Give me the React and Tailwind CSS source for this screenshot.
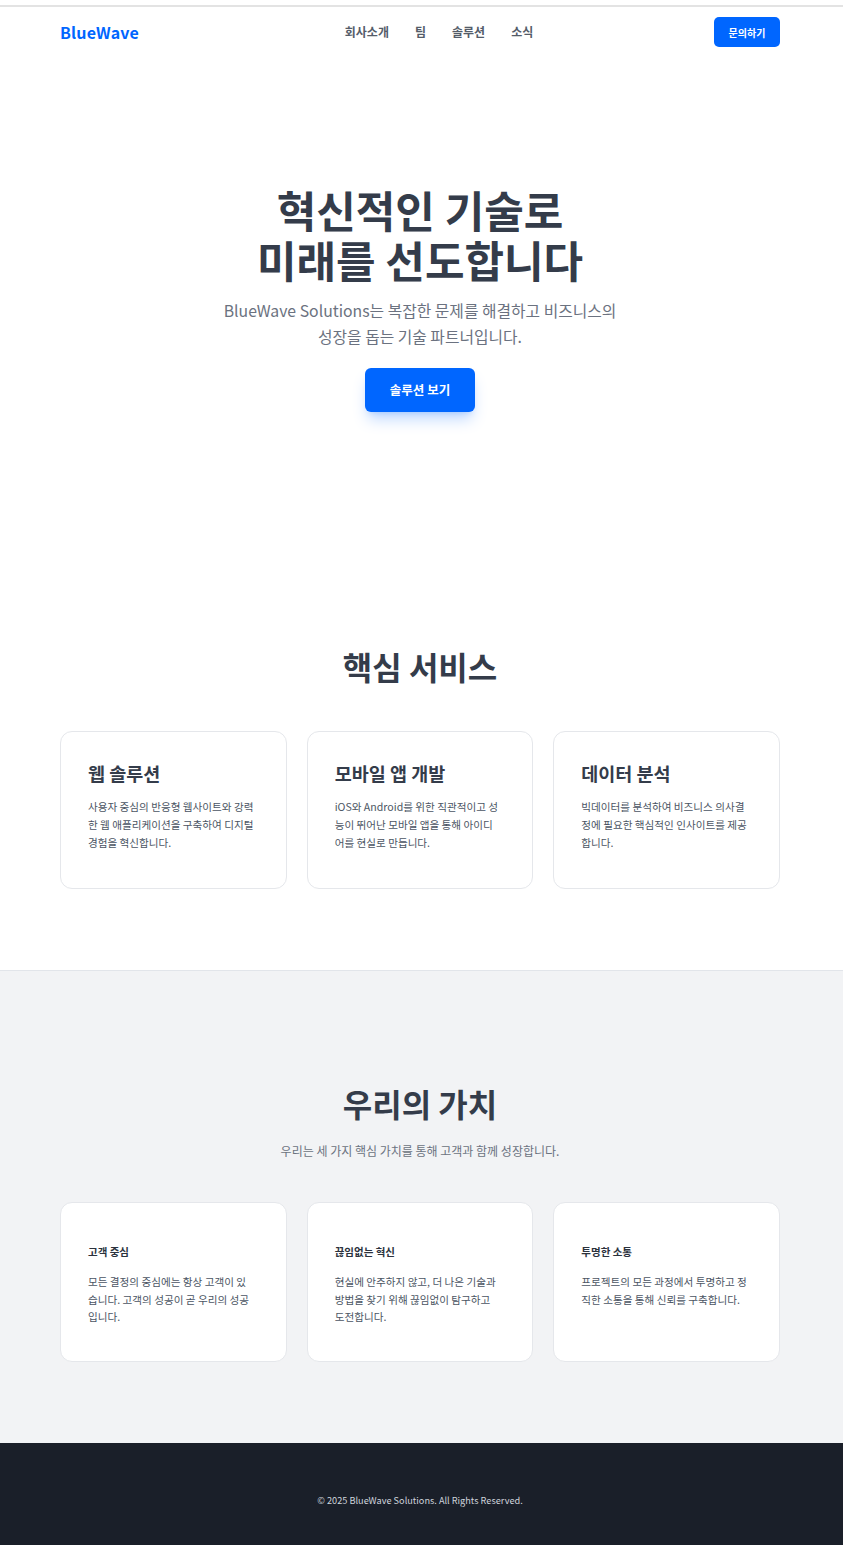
import React from "react";

const font = { fontFamily: '"Noto Sans CJK KR", "Noto Sans", sans-serif' };

const services = [
  {
    title: "웹 솔루션",
    lines: ["사용자 중심의 반응형 웹사이트와 강력", "한 웹 애플리케이션을 구축하여 디지털", "경험을 혁신합니다."],
  },
  {
    title: "모바일 앱 개발",
    lines: ["iOS와 Android를 위한 직관적이고 성", "능이 뛰어난 모바일 앱을 통해 아이디", "어를 현실로 만듭니다."],
  },
  {
    title: "데이터 분석",
    lines: ["빅데이터를 분석하여 비즈니스 의사결", "정에 필요한 핵심적인 인사이트를 제공", "합니다."],
  },
];

const values = [
  {
    title: "고객 중심",
    lines: ["모든 결정의 중심에는 항상 고객이 있", "습니다. 고객의 성공이 곧 우리의 성공", "입니다."],
  },
  {
    title: "끊임없는 혁신",
    lines: ["현실에 안주하지 않고, 더 나은 기술과", "방법을 찾기 위해 끊임없이 탐구하고", "도전합니다."],
  },
  {
    title: "투명한 소통",
    lines: ["프로젝트의 모든 과정에서 투명하고 정", "직한 소통을 통해 신뢰를 구축합니다."],
  },
];

function Lines({ lines }) {
  return lines.map((l, i) => (
    <span key={i} className="block whitespace-nowrap">
      {l}
    </span>
  ));
}

export default function App() {
  return (
    <div style={font} className="bg-white text-[#343c4a] min-h-screen">
      <div className="h-[5px] bg-white" />
      <div className="h-[2px] bg-[#e3e3e3]" />
      <div className="pr-[3px]">
        <header className="max-w-[768px] mx-auto px-6 h-[50px] flex items-center">
          <div className="flex-1">
            <span className="text-[16px] font-bold text-[#0066ff] tracking-[0.2px]">BlueWave</span>
          </div>
          <nav className="ml-[38px] flex items-center gap-[26px] text-[12px] font-bold text-[#545c69]">
            <span>회사소개</span>
            <span>팀</span>
            <span>솔루션</span>
            <span>소식</span>
          </nav>
          <div className="flex-1 flex justify-end">
            <button className="w-[66px] h-[30px] rounded-[5px] bg-[#0066ff] text-white text-[10px] font-bold">
              문의하기
            </button>
          </div>
        </header>

        <section className="pt-[127px] pb-[232px] text-center">
          <h1 className="text-[43px] leading-[50px] font-bold text-[#343c4a]">
            혁신적인 기술로
            <br />
            미래를 선도합니다
          </h1>
          <p className="mt-[14px] text-[15.8px] leading-[26px] text-[#6b7280]">
            BlueWave Solutions는 복잡한 문제를 해결하고 비즈니스의
            <br />
            성장을 돕는 기술 파트너입니다.
          </p>
          <button className="mt-[18px] w-[110px] h-[44px] rounded-[6px] bg-[#0066ff] text-white text-[12.5px] font-bold shadow-lg shadow-blue-500/30">
            솔루션 보기
          </button>
        </section>

        <section className="pb-[81px]">
          <h2 className="text-center text-[32px] leading-[45px] font-bold text-[#343c4a]">핵심 서비스</h2>
          <div className="max-w-[768px] mx-auto px-6 mt-[42px] grid grid-cols-3 gap-5">
            {services.map((s) => (
              <div key={s.title} className="h-[158px] rounded-xl border border-[#e5e7eb] bg-white px-[27px] pt-[27px]">
                <h3 className="text-[18.5px] leading-[28px] font-bold text-[#343c4a]">{s.title}</h3>
                <p className="mt-[11px] text-[10.6px] leading-[18px] text-[#4b5563]">
                  <Lines lines={s.lines} />
                </p>
              </div>
            ))}
          </div>
        </section>
      </div>

      <section className="bg-[#f2f3f5] border-t border-[#e2e5ea] pt-[110px] pb-[81px]">
        <div className="pr-[3px]">
          <h2 className="text-center text-[32px] leading-[45px] font-bold text-[#343c4a]">우리의 가치</h2>
          <p className="mt-[16px] text-center text-[12px] leading-[18px] text-[#6b7280]">
            우리는 세 가지 핵심 가치를 통해 고객과 함께 성장합니다.
          </p>
          <div className="max-w-[768px] mx-auto px-6 mt-[42px] grid grid-cols-3 gap-5">
            {values.map((v) => (
              <div key={v.title} className="h-[160px] rounded-xl border border-[#e5e7eb] bg-white px-[27px] pt-[41px]">
                <h3 className="text-[10.5px] leading-[16px] font-bold text-[#2b323d]">{v.title}</h3>
                <p className="mt-[13px] text-[10.6px] leading-[17.5px] text-[#4b5563]">
                  <Lines lines={v.lines} />
                </p>
              </div>
            ))}
          </div>
        </div>
      </section>

      <footer className="bg-[#1a1f29] py-12 text-center pr-[3px]">
        <p className="text-[9.2px] leading-[18px] text-[#cfd4dc]">© 2025 BlueWave Solutions. All Rights Reserved.</p>
      </footer>
    </div>
  );
}
